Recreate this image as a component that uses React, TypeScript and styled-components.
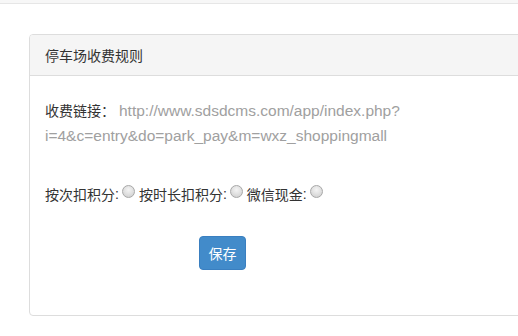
import React from "react";
import styled, { createGlobalStyle } from "styled-components";

const Global = createGlobalStyle`
  html, body { margin: 0; padding: 0; background: #fff; }
  body { font-family: "Microsoft YaHei", "Liberation Sans", "Noto Sans CJK SC", sans-serif; font-size: 14px; color: #333; overflow: hidden; }
`;

const TopBar = styled.div`
  height: 3px;
  background: #f7f7f7;
  border-bottom: 1px solid #e6e6e6;
`;

const Page = styled.div`
  padding: 30px 0 0 29px;
`;

const Panel = styled.div`
  width: 520px;
  height: 282px;
  border: 1px solid #ddd;
  border-radius: 4px;
  background: #fff;
  box-sizing: border-box;
`;

const PanelHeading = styled.div`
  height: 41px;
  box-sizing: border-box;
  padding: 0 15px;
  display: flex;
  align-items: center;
  background: #f5f5f5;
  border-bottom: 1px solid #ddd;
  border-radius: 3px 3px 0 0;
  font-family: "Noto Sans CJK SC", sans-serif;
  font-size: 14px;
  color: #333;
`;

const PanelBody = styled.div`
  padding: 22px 15px 15px;
`;

const LinkRow = styled.div`
  width: 380px;
  font-size: 15.5px;
  line-height: 25px;
`;

const Label = styled.span`
  font-family: "Noto Sans CJK SC", sans-serif;
  font-size: 14px;
  line-height: 20px;
  color: #333;
  margin-right: 4px;
`;

const Url = styled.span`
  font-family: "Liberation Sans", Arial, sans-serif;
  font-size: 15.5px;
  color: #a0a0a0;
`;

const OptionRow = styled.div`
  margin-top: 36px;
  display: flex;
  align-items: center;
  font-family: "Noto Sans CJK SC", sans-serif;
  font-size: 14px;
  color: #333;
  height: 20px;
`;

const Option = styled.label`
  display: inline-flex;
  align-items: center;
  margin-right: 4px;
`;

const Radio = styled.span`
  display: inline-block;
  width: 11px;
  height: 11px;
  border-radius: 50%;
  border: 1px solid #a8a8a8;
  background: radial-gradient(circle at 50% 35%, #f4f4f4 0%, #d8d8d8 70%, #c8c8c8 100%);
  margin-left: 3px;
  margin-top: -5px;
`;

const Colon = styled.span`
  font-family: "Liberation Sans", Arial, sans-serif;
`;

const Actions = styled.div`
  margin-top: 32px;
  padding-left: 154px;
`;

const Button = styled.button`
  width: 47px;
  height: 34px;
  border: 1px solid #3a7fc0;
  border-radius: 4px;
  background: #428bca;
  color: #fff;
  font-family: "Noto Sans CJK SC", sans-serif;
  font-size: 14px;
  padding: 0;
  cursor: pointer;
`;

const options = ["按次扣积分", "按时长扣积分", "微信现金"];

export default function App() {
  return (
    <>
      <Global />
      <TopBar />
      <Page>
        <Panel>
          <PanelHeading>停车场收费规则</PanelHeading>
          <PanelBody>
            <LinkRow>
              <Label>收费链接：</Label>
              <Url>http://www.sdsdcms.com/app/index.php?i=4&amp;c=entry&amp;do=park_pay&amp;m=wxz_shoppingmall</Url>
            </LinkRow>
            <OptionRow>
              {options.map((o) => (
                <Option key={o}>
                  {o}
                  <Colon>:</Colon>
                  <Radio />
                </Option>
              ))}
            </OptionRow>
            <Actions>
              <Button>保存</Button>
            </Actions>
          </PanelBody>
        </Panel>
      </Page>
    </>
  );
}
